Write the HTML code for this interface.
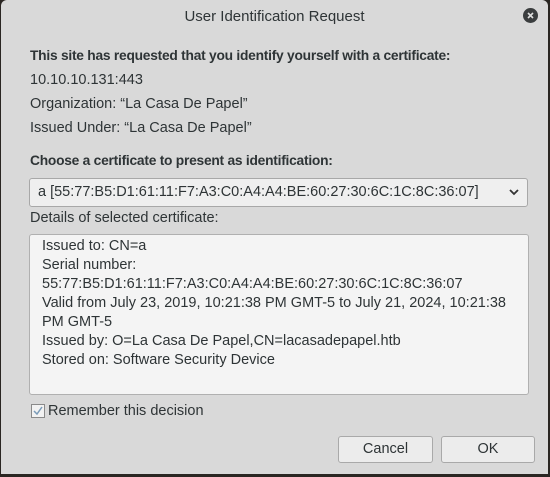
<!DOCTYPE html>
<html><head><style>
html,body{margin:0;padding:0;width:550px;height:477px;overflow:hidden;background:#2a2622;}
body{font-family:"Liberation Sans",sans-serif;color:#2e3436;font-size:14.5px;}
.dlg{position:absolute;left:1px;top:0;width:547px;height:474px;background:#d9d9d9;border-radius:6px 6px 0 0;}
.t{position:absolute;white-space:nowrap;}
.title{left:0;width:547px;text-align:center;top:8px;font-size:15px;color:#2e3436;}
.close{position:absolute;left:522px;top:8px;width:15px;height:15px;border-radius:50%;background:#3a3d3e;}
.b{font-weight:bold;font-size:13.8px;letter-spacing:-0.25px;}
.sel{position:absolute;left:28px;top:178px;width:497px;height:27px;border:1px solid #a8a8a8;background:#efefef;border-radius:3px;}
.area{position:absolute;left:28px;top:234px;width:498px;height:159px;border:1px solid #b0b0b0;background:#f4f4f4;border-radius:3px;}
.area div{position:absolute;left:12px;white-space:nowrap;}
.btn{position:absolute;top:436px;height:25px;border:1px solid #a9a9a9;background:#ececec;border-radius:3px;text-align:center;line-height:25px;}
.cb{position:absolute;left:30px;top:404px;width:12px;height:12px;border:1px solid #8a8a8a;background:#f2f2f2;}
</style></head><body>
<div class="dlg">
<div class="t title">User Identification Request</div>
<div class="close"><svg width="15" height="15"><path d="M5 5L10 10M10 5L5 10" stroke="#ddd" stroke-width="1.6"/></svg></div>
<div class="t b" style="left:29px;top:48px">This site has requested that you identify yourself with a certificate:</div>
<div class="t" style="left:29px;top:72px">10.10.10.131:443</div>
<div class="t" style="left:29px;top:96px">Organization: “La Casa De Papel”</div>
<div class="t" style="left:29px;top:120px">Issued Under: “La Casa De Papel”</div>
<div class="t b" style="left:29px;top:153px">Choose a certificate to present as identification:</div>
<div class="sel"><div class="t" style="left:8px;top:5px">a [55:77:B5:D1:61:11:F7:A3:C0:A4:A4:BE:60:27:30:6C:1C:8C:36:07]</div>
<svg style="position:absolute;left:478px;top:8px" width="12" height="10"><path d="M2 3L6 7L10 3" fill="none" stroke="#333" stroke-width="1.8"/></svg></div>
<div class="t" style="left:29px;top:210px">Details of selected certificate:</div>
<div class="area">
<div style="top:3px">Issued to: CN=a</div>
<div style="top:22px">Serial number:</div>
<div style="top:41px">55:77:B5:D1:61:11:F7:A3:C0:A4:A4:BE:60:27:30:6C:1C:8C:36:07</div>
<div style="top:60px">Valid from July 23, 2019, 10:21:38 PM GMT-5 to July 21, 2024, 10:21:38</div>
<div style="top:79px">PM GMT-5</div>
<div style="top:98px">Issued by: O=La Casa De Papel,CN=lacasadepapel.htb</div>
<div style="top:117px">Stored on: Software Security Device</div>
</div>
<div class="cb"><svg width="12" height="12" style="position:absolute;left:0;top:0"><path d="M2 6L5 9L10 2" fill="none" stroke="#7a9bb8" stroke-width="1.5"/></svg></div>
<div class="t" style="left:47px;top:403px">Remember this decision</div>
<div class="btn" style="left:337px;width:93px">Cancel</div>
<div class="btn" style="left:440px;width:92px">OK</div>
</div>
</body></html>
